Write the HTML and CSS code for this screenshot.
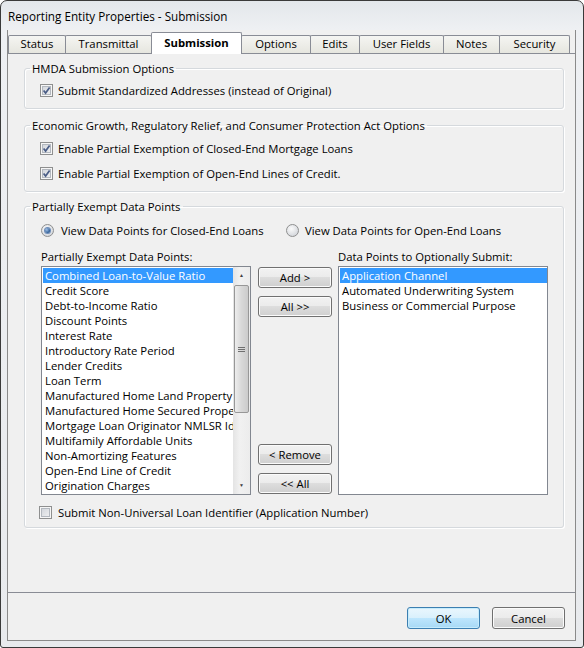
FILE: index.html
```html
<!DOCTYPE html>
<html lang="en">
<head>
    <meta charset="UTF-8" />
    <title>Reporting Entity Properties - Submission</title>
    <link rel="stylesheet" href="styles.css">
</head>
<body>

<div class="window">
    <div class="titlebar">Reporting Entity Properties - Submission</div>

    <div class="client">
        <div class="tabs">
            <div class="tab w-status">Status</div>
            <div class="tab w-transmittal">Transmittal</div>
            <div class="tab w-submission active">Submission</div>
            <div class="tab w-options">Options</div>
            <div class="tab w-edits">Edits</div>
            <div class="tab w-userfields">User Fields</div>
            <div class="tab w-notes">Notes</div>
            <div class="tab w-security">Security</div>
        </div>

        <div class="panel">
            <fieldset class="group g-hmda">
                <legend>HMDA Submission Options</legend>
                <label class="check">
                    <span class="cb"><svg viewBox="0 0 11 11" width="11" height="11"><path d="M2.6 5.4 L4.6 8 L8.6 2.6"/></svg></span>
                    Submit Standardized Addresses (instead of Original)
                </label>
            </fieldset>

            <fieldset class="group g-egrrcpa">
                <legend>Economic Growth, Regulatory Relief, and Consumer Protection Act Options</legend>
                <label class="check">
                    <span class="cb"><svg viewBox="0 0 11 11" width="11" height="11"><path d="M2.6 5.4 L4.6 8 L8.6 2.6"/></svg></span>
                    Enable Partial Exemption of Closed-End Mortgage Loans
                </label>
                <label class="check">
                    <span class="cb"><svg viewBox="0 0 11 11" width="11" height="11"><path d="M2.6 5.4 L4.6 8 L8.6 2.6"/></svg></span>
                    Enable Partial Exemption of Open-End Lines of Credit.
                </label>
            </fieldset>

            <fieldset class="group g-points">
                <legend>Partially Exempt Data Points</legend>

                <div class="radios">
                    <label class="radio first"><span class="rb on"></span>View Data Points for Closed-End Loans</label>
                    <label class="radio"><span class="rb"></span>View Data Points for Open-End Loans</label>
                </div>

                <div class="picker">
                    <div class="caption">Partially Exempt Data Points:</div>
                    <div></div>
                    <div class="caption">Data Points to Optionally Submit:</div>

                    <div class="listbox">
                        <div class="items">
                            <div class="item selected">Combined Loan-to-Value Ratio</div>
                            <div class="item">Credit Score</div>
                            <div class="item">Debt-to-Income Ratio</div>
                            <div class="item">Discount Points</div>
                            <div class="item">Interest Rate</div>
                            <div class="item">Introductory Rate Period</div>
                            <div class="item">Lender Credits</div>
                            <div class="item">Loan Term</div>
                            <div class="item">Manufactured Home Land Property Interest</div>
                            <div class="item">Manufactured Home Secured Property Type</div>
                            <div class="item">Mortgage Loan Originator NMLSR Identifier</div>
                            <div class="item">Multifamily Affordable Units</div>
                            <div class="item">Non-Amortizing Features</div>
                            <div class="item">Open-End Line of Credit</div>
                            <div class="item">Origination Charges</div>
                        </div>
                        <div class="vscroll">
                            <div class="arrow up">&#9650;</div>
                            <div class="track"><div class="thumb"><span></span><span></span><span></span></div></div>
                            <div class="arrow down">&#9660;</div>
                        </div>
                    </div>

                    <div class="movebtns">
                        <button class="btn move">Add &gt;</button>
                        <button class="btn move">All &gt;&gt;</button>
                        <div class="spacer"></div>
                        <button class="btn move">&lt; Remove</button>
                        <button class="btn move">&lt;&lt; All</button>
                    </div>

                    <div class="listbox">
                        <div class="items">
                            <div class="item selected">Application Channel</div>
                            <div class="item">Automated Underwriting System</div>
                            <div class="item">Business or Commercial Purpose</div>
                        </div>
                    </div>
                </div>

                <label class="check uli">
                    <span class="cb"></span>
                    Submit Non-Universal Loan Identifier (Application Number)
                </label>
            </fieldset>
        </div>

        <div class="footer">
            <button class="btn dialog default">OK</button>
            <button class="btn dialog">Cancel</button>
        </div>
    </div>
</div>

</body>
</html>
```

FILE: styles.css
```css
body {
    margin: 0;
    font-family: 'Open Sans', 'Noto Sans', sans-serif;
    font-size: 11.3px;
    color: #000;
    background: #fff;
}

.window {
    width: 584px;
    height: 648px;
    box-sizing: border-box;
    border: 1px solid #3a3a3a;
    border-radius: 7px 7px 3px 3px;
    background: linear-gradient(#e3e7eb, #eef0f3 28px, #e8eaed);
    display: flex;
    flex-direction: column;
}

.titlebar {
    height: 29px;
    padding-left: 7px;
    display: flex;
    align-items: center;
    font-size: 11.7px;
}

.client {
    width: 569px;
    height: 611px;
    box-sizing: border-box;
    margin-left: 6px;
    border: 1px solid #8a8a8a;
    border-top: none;
    background: #f0f0f0;
    display: flex;
    flex-direction: column;
}

/* tab strip */
.tabs {
    height: 23px;
    display: flex;
    align-items: flex-end;
}

.tab {
    height: 18px;
    box-sizing: border-box;
    margin-left: -1px;
    border: 1px solid #898c95;
    border-bottom: none;
    border-radius: 2px 2px 0 0;
    background: linear-gradient(#f5f5f2, #e6e6df);
    text-align: center;
    line-height: 16px;
}

.tab:first-child { margin-left: 0; }

.tab.active {
    height: 22px;
    margin-bottom: -1px;
    background: #fff;
    font-weight: bold;
    line-height: 20px;
    position: relative;
    z-index: 1;
}

.w-status { width: 58px; }
.w-transmittal { width: 87px; }
.w-submission { width: 91px; }
.w-options { width: 70px; }
.w-edits { width: 50px; }
.w-userfields { width: 85px; }
.w-notes { width: 57px; }
.w-security { width: 71px; }

.panel {
    height: 540px;
    box-sizing: border-box;
    border-top: 1px solid #898c95;
    border-bottom: 1px solid #898c95;
    padding: 0 11px 0 16px;
}

/* group boxes */
.group {
    margin: 9px 0 0;
    border: 1px solid #d5d9dd;
    border-radius: 3px;
    box-shadow: inset 1px 1px 0 #fff, 1px 1px 0 #fff;
    padding: 7px 10px 10px 15px;
    min-width: 0;
}

.group legend {
    margin-left: -10px;
    padding: 0 2px;
    line-height: 15px;
}

.g-hmda { margin-top: 7px; }
.g-egrrcpa { padding-top: 8px; }
.g-points { margin-top: 7px; padding: 9px 10px 7px 16px; }
.g-points legend { margin-left: -11px; }

.check {
    display: flex;
    align-items: center;
    height: 15px;
    gap: 5px;
}

.check + .check { margin-top: 10px; }

.check.uli {
    margin: 10px 0 0 -2px;
    gap: 6px;
}

/* checkbox and radio glyphs */
.cb {
    width: 13px;
    height: 13px;
    flex: none;
    box-sizing: border-box;
    border: 1px solid #8e8f8f;
    box-shadow: inset 0 0 0 1px #f6f6f6, inset 0 0 0 2px #b3b8bf;
    background: linear-gradient(135deg, #cdd1d7, #f4f4f5);
}

.cb svg {
    display: block;
}

.cb path {
    fill: none;
    stroke: #4a5d86;
    stroke-width: 1.7;
}

.radios {
    display: flex;
    height: 15px;
}

.radio {
    display: flex;
    align-items: center;
    gap: 6px;
}

.radio.first { width: 245px; }
.radio.first .rb { margin-right: 1px; }

.rb {
    width: 13px;
    height: 13px;
    flex: none;
    box-sizing: border-box;
    border: 1px solid #8e8f8f;
    border-radius: 50%;
    background: radial-gradient(circle at 40% 35%, #fbfbfb, #d3d6db 80%);
    display: flex;
    align-items: center;
    justify-content: center;
}

.rb.on::after {
    content: '';
    width: 5px;
    height: 5px;
    border-radius: 50%;
    background: radial-gradient(circle at 35% 35%, #9fc0e8, #22538d 75%);
    box-shadow: 0 0 0 1px #6d8cb8;
}

/* the two list boxes and the move buttons */
.picker {
    margin-top: 11px;
    display: grid;
    grid-template-columns: 217px 80px 210px;
    grid-template-rows: 15px 229px;
    row-gap: 2px;
}

.caption { line-height: 15px; }

.listbox {
    width: 210px;
    height: 229px;
    box-sizing: border-box;
    border: 1px solid #828790;
    background: #fff;
    display: flex;
}

.items {
    flex: 1;
    min-width: 0;
    padding: 1px 0 0 1px;
    overflow: hidden;
}

.item {
    height: 15px;
    line-height: 15px;
    padding-left: 2px;
    white-space: nowrap;
    overflow: hidden;
}

.item.selected {
    background: #3399ff;
    color: #fff;
}

.vscroll {
    width: 17px;
    flex: none;
    display: flex;
    flex-direction: column;
    background: linear-gradient(to right, #e4e4e4, #f1f1f1 40%, #ececec);
}

.arrow {
    height: 17px;
    text-align: center;
    font-size: 5px;
    line-height: 17px;
    color: #404040;
}

.track {
    flex: 1;
    padding-top: 1px;
}

.thumb {
    height: 128px;
    margin: 0 1px;
    box-sizing: border-box;
    border: 1px solid #979797;
    border-radius: 2px;
    background: linear-gradient(to right, #ededed, #d8d8d8 50%, #cbcbcb);
    display: flex;
    flex-direction: column;
    justify-content: center;
    align-items: center;
    gap: 1px;
}

.thumb span {
    width: 7px;
    height: 1px;
    background: #6f6f6f;
}

.movebtns {
    width: 74px;
    display: flex;
    flex-direction: column;
    gap: 8px;
    padding: 1px 0;
}

.movebtns .spacer {
    flex: 1;
    margin-bottom: 1px;
}

.btn {
    box-sizing: border-box;
    border: 1px solid #707070;
    border-radius: 3px;
    background: linear-gradient(#f2f2f2 0%, #ebebeb 50%, #dddddd 50%, #cfcfcf 100%);
    box-shadow: inset 0 0 0 1px #fbfbfb;
    font: inherit;
    color: #000;
    padding: 0;
}

.btn.move {
    height: 21px;
    flex: none;
}

.footer {
    flex: 1;
    display: flex;
    justify-content: flex-end;
    align-items: flex-start;
    gap: 12px;
    padding: 14px 10px 0 0;
}

.btn.dialog {
    width: 73px;
    height: 22px;
}

.btn.default {
    border-color: #3c7fb1;
    background: linear-gradient(#eaf6fd 0%, #d9f0fc 50%, #bee6fd 50%, #a7d9f5 100%);
    box-shadow: inset 0 0 0 1px #c6ecfc;
}
```
